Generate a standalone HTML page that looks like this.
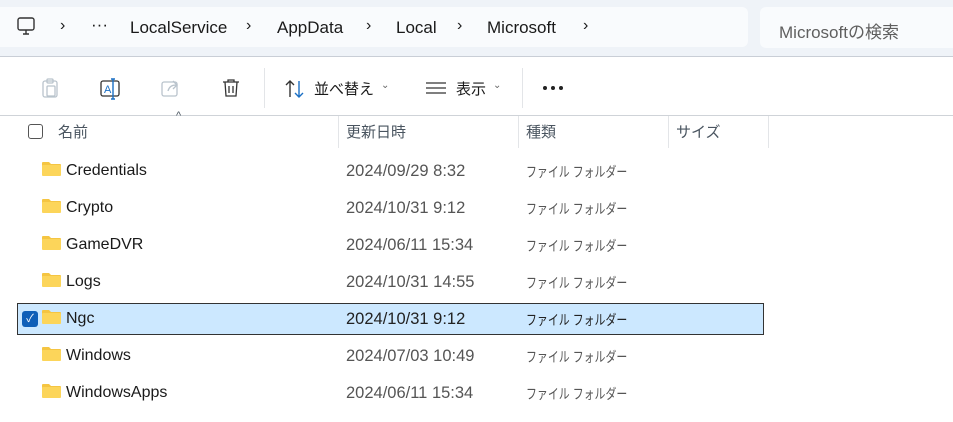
<!DOCTYPE html>
<html><head><meta charset="utf-8"><style>
*{margin:0;padding:0;box-sizing:border-box}
body{width:953px;height:422px;overflow:hidden;background:#fff;font-family:"Liberation Sans","Noto Sans CJK JP",sans-serif;position:relative;color:#1a1a1a}
.top{position:absolute;left:0;top:0;width:953px;height:57px;background:#eff3f8;border-bottom:1px solid #c9ced6}
.addr{position:absolute;left:0;top:7px;width:748px;height:40px;background:#f9fbfd;border-radius:0 6px 6px 0}
.search{position:absolute;left:760px;top:7px;width:200px;height:41px;background:#f9fbfd;border-radius:6px;font-size:17px;color:#5f5f5f;padding:11px 0 0 19px}
.t{position:absolute;font-size:17px;top:18px;white-space:nowrap}
.ch{position:absolute;top:17px;font-size:16px}
.tb{position:absolute;font-size:15px}
.hdr{position:absolute;left:0;top:115px;width:953px;height:32px;border-top:1px solid #cfd3d8}
.hdr span{position:absolute;top:5px;font-size:15px;color:#4a5560}
.div{position:absolute;top:0;width:1px;height:32px;background:#e3e5e8}
.row{position:absolute;left:17px;width:747px;height:32px}
.row .n{position:absolute;left:49px;top:7px;font-size:16px}
.row .d{position:absolute;left:329px;top:7px;font-size:16.5px;color:#555;white-space:nowrap}
.row .k{position:absolute;left:509px;top:7px;font-size:14px;color:#555;white-space:nowrap;transform:scaleX(0.78);transform-origin:0 0}
.fold{position:absolute;left:25px;top:6px;width:19px;height:15px}
.sel{background:#cce8ff;border:1px solid #333}
</style></head><body>
<div class="top">
<div class="addr"></div>
<svg style="position:absolute;left:16px;top:16px" width="20" height="20" viewBox="0 0 20 20"><rect x="2" y="2" width="16" height="12" rx="2" fill="none" stroke="#333" stroke-width="1.4"/><path d="M7 18h6M10 14v4" stroke="#333" stroke-width="1.4"/></svg>
<span class="ch" style="left:60px">›</span>
<span class="t" style="left:91px;top:15px">···</span>
<span class="t" style="left:130px">LocalService</span>
<span class="ch" style="left:246px">›</span>
<span class="t" style="left:277px">AppData</span>
<span class="ch" style="left:366px">›</span>
<span class="t" style="left:396px">Local</span>
<span class="ch" style="left:457px">›</span>
<span class="t" style="left:487px">Microsoft</span>
<span class="ch" style="left:583px">›</span>
<div class="search">Microsoftの検索</div>
</div>
<svg style="position:absolute;left:40px;top:78px" width="20" height="20" viewBox="0 0 20 20" fill="none" stroke="#b9c3cc" stroke-width="1.3"><rect x="3" y="3" width="14" height="16" rx="2"/><rect x="7" y="1" width="6" height="4" rx="1"/><rect x="7" y="8" width="8" height="10" rx="1"/></svg>
<svg style="position:absolute;left:99px;top:78px" width="24" height="22" viewBox="0 0 24 22" fill="none"><rect x="2" y="3" width="18" height="15" rx="2" stroke="#333" stroke-width="1.3"/><text x="5" y="15" font-size="11" fill="#1a6fc4" font-family="Liberation Sans">A</text><path d="M14 1v20M12 1h4M12 21h4" stroke="#1a6fc4" stroke-width="1.4"/></svg>
<svg style="position:absolute;left:160px;top:78px" width="22" height="20" viewBox="0 0 22 20" fill="none" stroke="#b9c3cc" stroke-width="1.3"><rect x="2" y="4" width="15" height="14" rx="2"/><path d="M8 13c1-4 4-6 8-6M13 3l4 4-4 4"/></svg>
<svg style="position:absolute;left:220px;top:77px" width="22" height="22" viewBox="0 0 22 22" fill="none" stroke="#333" stroke-width="1.3"><path d="M3 5h16M8 5V3h6v2M5 5l1 14h10l1-14M9 9v7M13 9v7"/></svg>
<div style="position:absolute;left:264px;top:68px;width:1px;height:40px;background:#e3e5e8"></div>
<svg style="position:absolute;left:284px;top:79px" width="22" height="20" viewBox="0 0 22 20" fill="none" stroke-width="1.4"><path d="M6 18V2M2 6l4-4 4 4" stroke="#333"/><path d="M15 2v16M11 14l4 4 4-4" stroke="#1a6fc4"/></svg>
<span class="tb" style="left:314px;top:78px">並べ替え</span><span style="position:absolute;left:381px;top:80px;font-size:10px;color:#666">⌄</span>
<svg style="position:absolute;left:425px;top:80px" width="22" height="16" viewBox="0 0 22 16" stroke="#333" stroke-width="1.3"><path d="M1 3h20M1 8h20M1 13h20"/></svg>
<span class="tb" style="left:456px;top:78px">表示</span><span style="position:absolute;left:493px;top:80px;font-size:10px;color:#666">⌄</span>
<div style="position:absolute;left:522px;top:68px;width:1px;height:40px;background:#e3e5e8"></div>
<svg style="position:absolute;left:542px;top:85px" width="22" height="6" viewBox="0 0 22 6" fill="#222"><circle cx="3" cy="3" r="2"/><circle cx="11" cy="3" r="2"/><circle cx="19" cy="3" r="2"/></svg>
<div class="hdr">
<div style="position:absolute;left:28px;top:8px;width:15px;height:15px;border:1px solid #555;border-radius:3px"></div>
<span style="left:58px">名前</span>
<span style="left:176px;top:-6px;font-size:11px">^</span>
<div class="div" style="left:338px"></div><span style="left:346px">更新日時</span>
<div class="div" style="left:518px"></div><span style="left:526px">種類</span>
<div class="div" style="left:668px"></div><span style="left:676px">サイズ</span>
<div class="div" style="left:768px"></div>
</div>
<div class="row" style="top:155px"><svg class="fold" viewBox="0 0 19 15"><path d="M0 2a1 1 0 0 1 1-1h6l2 2h9a1 1 0 0 1 1 1v10H0z" fill="#f5c542"/><rect x="0" y="4" width="19" height="11" rx="1" fill="#fcd55a"/></svg><span class="n">Credentials</span><span class="d">2024/09/29 8:32</span><span class="k">ファイル フォルダー</span></div>
<div class="row" style="top:192px"><svg class="fold" viewBox="0 0 19 15"><path d="M0 2a1 1 0 0 1 1-1h6l2 2h9a1 1 0 0 1 1 1v10H0z" fill="#f5c542"/><rect x="0" y="4" width="19" height="11" rx="1" fill="#fcd55a"/></svg><span class="n">Crypto</span><span class="d">2024/10/31 9:12</span><span class="k">ファイル フォルダー</span></div>
<div class="row" style="top:229px"><svg class="fold" viewBox="0 0 19 15"><path d="M0 2a1 1 0 0 1 1-1h6l2 2h9a1 1 0 0 1 1 1v10H0z" fill="#f5c542"/><rect x="0" y="4" width="19" height="11" rx="1" fill="#fcd55a"/></svg><span class="n">GameDVR</span><span class="d">2024/06/11 15:34</span><span class="k">ファイル フォルダー</span></div>
<div class="row" style="top:266px"><svg class="fold" viewBox="0 0 19 15"><path d="M0 2a1 1 0 0 1 1-1h6l2 2h9a1 1 0 0 1 1 1v10H0z" fill="#f5c542"/><rect x="0" y="4" width="19" height="11" rx="1" fill="#fcd55a"/></svg><span class="n">Logs</span><span class="d">2024/10/31 14:55</span><span class="k">ファイル フォルダー</span></div>
<div class="row sel" style="top:303px"><div style="position:absolute;left:4px;top:7px;width:16px;height:16px;background:#0f5fb8;border-radius:3px;color:#fff;font-size:11px;text-align:center;line-height:16px">✓</div><svg class="fold" viewBox="0 0 19 15" style="left:24px;top:5px"><path d="M0 2a1 1 0 0 1 1-1h6l2 2h9a1 1 0 0 1 1 1v10H0z" fill="#f5c542"/><rect x="0" y="4" width="19" height="11" rx="1" fill="#fcd55a"/></svg><span class="n" style="left:48px;top:6px">Ngc</span><span class="d" style="color:#222;left:328px;top:6px">2024/10/31 9:12</span><span class="k" style="color:#222;left:508px;top:6px">ファイル フォルダー</span></div>
<div class="row" style="top:340px"><svg class="fold" viewBox="0 0 19 15"><path d="M0 2a1 1 0 0 1 1-1h6l2 2h9a1 1 0 0 1 1 1v10H0z" fill="#f5c542"/><rect x="0" y="4" width="19" height="11" rx="1" fill="#fcd55a"/></svg><span class="n">Windows</span><span class="d">2024/07/03 10:49</span><span class="k">ファイル フォルダー</span></div>
<div class="row" style="top:377px"><svg class="fold" viewBox="0 0 19 15"><path d="M0 2a1 1 0 0 1 1-1h6l2 2h9a1 1 0 0 1 1 1v10H0z" fill="#f5c542"/><rect x="0" y="4" width="19" height="11" rx="1" fill="#fcd55a"/></svg><span class="n">WindowsApps</span><span class="d">2024/06/11 15:34</span><span class="k">ファイル フォルダー</span></div>
</body></html>
